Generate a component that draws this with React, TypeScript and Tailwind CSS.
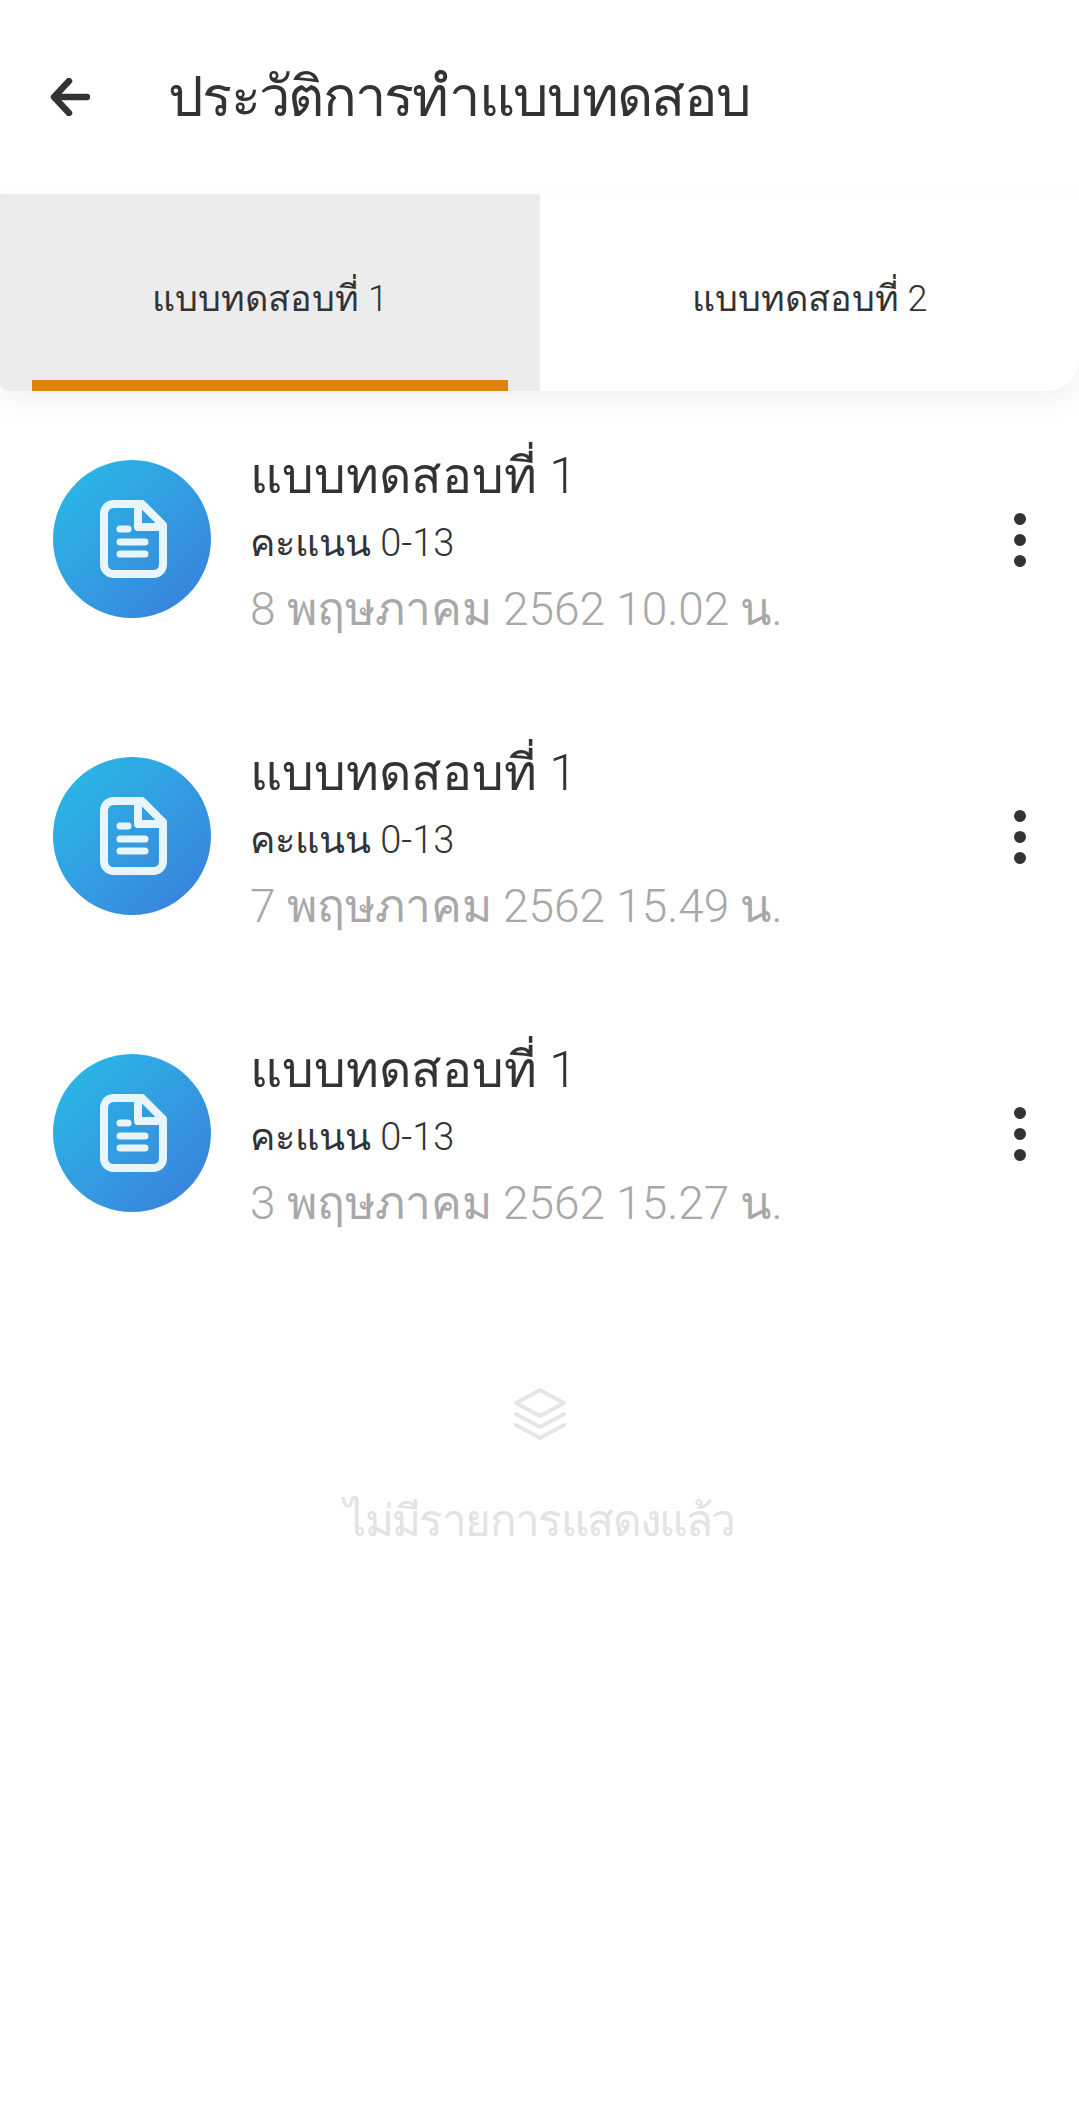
const thai = "font-['Roboto','Noto_Sans',sans-serif] font-light";

function DocIcon() {
  return (
    <svg width="67" height="78" viewBox="0 0 67 78" fill="none" stroke="#e8f6fc" strokeLinecap="round" strokeLinejoin="round">
      <path d="M14 4H42L63 25V64C63 70 59 74 53 74H14C8 74 4 70 4 64V14C4 8 8 4 14 4Z" strokeWidth="8" />
      <path d="M38 5V27H62" strokeWidth="8" />
      <line x1="20" y1="29" x2="28" y2="29" strokeWidth="7" />
      <line x1="20" y1="42" x2="45" y2="42" strokeWidth="7" />
      <line x1="20" y1="54" x2="45" y2="54" strokeWidth="7" />
    </svg>
  );
}

function Item({ date }: { date: string }) {
  return (
    <div className="flex h-[297px] items-center pl-[53px] pr-[53px]">
      <div className="mb-[2px] flex h-[158px] w-[158px] shrink-0 items-center justify-center rounded-full bg-gradient-to-br from-[#25bde6] to-[#3a7cdc] pl-[2px]">
        <DocIcon />
      </div>
      <div className="ml-[39px] flex min-w-0 flex-1 flex-col pt-[5px]">
        <div className="h-[66px] text-[50px] leading-[66px] text-[#333333]">แบบทดสอบที่ 1</div>
        <div className="mt-[1px] h-[66px] text-[38px] leading-[66px] text-[#333333]">คะแนน 0-13</div>
        <div className="h-[66px] text-[46px] leading-[66px] text-[#a8a8a8]">{date}</div>
      </div>
      <div className="flex flex-col gap-[9px]">
        <span className="h-[12px] w-[12px] rounded-full bg-[#333333]" />
        <span className="h-[12px] w-[12px] rounded-full bg-[#333333]" />
        <span className="h-[12px] w-[12px] rounded-full bg-[#333333]" />
      </div>
    </div>
  );
}

export default function App() {
  return (
    <div className={`min-h-[2114px] w-[1079px] bg-white ${thai}`}>
      <header className="flex h-[194px] items-center pl-[50px]">
        <svg width="40" height="38" viewBox="0 0 40 38" fill="none">
          <path d="M19 3L4 19L19 35M5 19H37" stroke="#333333" strokeWidth="6.5" strokeLinecap="round" strokeLinejoin="round" />
        </svg>
        <h1 className="ml-[78px] text-[56px] font-light leading-none tracking-[-1.7px] text-[#333333]">ประวัติการทำแบบทดสอบ</h1>
      </header>
      <div className="flex h-[197px] overflow-hidden rounded-br-[32px] rounded-bl-[8px] shadow-[0_12px_28px_rgba(0,0,0,0.05)]">
        <div className="flex w-[540px] flex-col bg-[#ececec]">
          <div className="flex flex-1 items-center justify-center pt-[24px] text-[36px] text-[#333333]">แบบทดสอบที่ 1</div>
          <div className="mx-[32px] h-[11px] bg-[#e2820e]" />
        </div>
        <div className="flex flex-1 items-center justify-center pt-[13px] text-[36px] text-[#333333]">แบบทดสอบที่ 2</div>
      </div>
      <Item date="8 พฤษภาคม 2562 10.02 น." />
      <Item date="7 พฤษภาคม 2562 15.49 น." />
      <Item date="3 พฤษภาคม 2562 15.27 น." />
      <div className="flex flex-col items-center pt-[105px]">
        <svg width="56" height="54" viewBox="0 0 56 54" fill="none" stroke="#e6e6e6" strokeWidth="4" strokeLinejoin="round" strokeLinecap="round">
          <path d="M28 3L52 16L28 29L4 16Z" />
          <path d="M4 27L28 40L52 27" />
          <path d="M4 38L28 51L52 38" />
        </svg>
        <div className="mt-[48px] text-[44px] leading-[64px] tracking-[-1.6px] text-[#e3e3e3]">ไม่มีรายการแสดงแล้ว</div>
      </div>
    </div>
  );
}
